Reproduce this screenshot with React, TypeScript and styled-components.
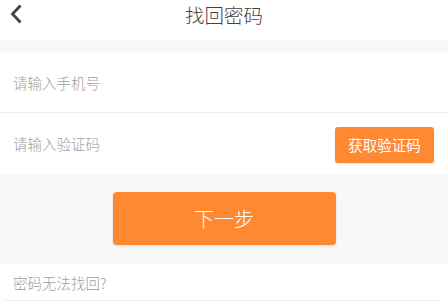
import React from "react";
import styled, { createGlobalStyle } from "styled-components";

const Global = createGlobalStyle`
  html, body { margin: 0; padding: 0; background: #ffffff; }
  body { font-family: "Noto Sans CJK SC", "Noto Sans", sans-serif; }
  * { box-sizing: border-box; }
`;

const Page = styled.div`
  width: 448px;
  height: 307px;
  display: flex;
  flex-direction: column;
  overflow: hidden;
  background: #ffffff;
`;

const Header = styled.header`
  height: 40px;
  display: grid;
  grid-template-columns: 40px 1fr 40px;
  align-items: start;
  background: #ffffff;
`;

const Back = styled.button`
  border: none;
  background: none;
  padding: 4px 0 0 9px;
  display: flex;
  cursor: pointer;
`;

const Title = styled.h1`
  margin: 0;
  text-align: center;
  font-size: 19.5px;
  font-weight: 300;
  color: #4b3e3e;
  line-height: 30px;
`;

const Spacer = styled.div<{ $h: number }>`
  height: ${(p) => p.$h}px;
  background: #f8f8f8;
`;

const Row = styled.div<{ $divider?: boolean }>`
  height: 61px;
  display: flex;
  align-items: center;
  justify-content: space-between;
  padding: 0 14px 0 13px;
  background: #ffffff;
  border-bottom: ${(p) => (p.$divider ? "1px solid #ececec" : "none")};
`;

const Placeholder = styled.span`
  font-size: 14.5px;
  font-weight: 300;
  color: #9e9e9e;
`;

const CodeButton = styled.button`
  width: 99px;
  height: 36px;
  border: none;
  border-radius: 3px;
  background: #ff8833;
  color: #ffffff;
  font-family: inherit;
  font-size: 14.5px;
  padding: 0;
  box-shadow: 0 1px 2px rgba(0, 0, 0, 0.12);
  margin-top: 2px;
`;

const Action = styled.div`
  height: 90px;
  background: #f8f8f8;
  display: flex;
  justify-content: center;
  padding-top: 18px;
`;

const NextButton = styled.button`
  width: 223px;
  height: 53px;
  border: none;
  border-radius: 4px;
  background: #ff8833;
  color: #ffffff;
  font-family: inherit;
  font-size: 20px;
  font-weight: 300;
  padding: 0;
  box-shadow: 0 1px 3px rgba(0, 0, 0, 0.12);
`;

const Help = styled.div`
  height: 37px;
  margin: 0 6px 0 3px;
  padding-left: 10px;
  display: flex;
  align-items: center;
  border-bottom: 1px solid #efefef;
  font-size: 14.5px;
  font-weight: 300;
  color: #9e9e9e;
`;

export default function App() {
  return (
    <Page>
      <Global />
      <Header>
        <Back aria-label="返回">
          <svg width="14" height="20" viewBox="0 0 14 20">
            <path d="M11.5 1.5 L3.5 10 L11.5 18.5" fill="none" stroke="#4b3e3e" strokeWidth="2.8" />
          </svg>
        </Back>
        <Title>找回密码</Title>
        <span />
      </Header>
      <Spacer $h={12} />
      <Row $divider>
        <Placeholder>请输入手机号</Placeholder>
      </Row>
      <Row>
        <Placeholder>请输入验证码</Placeholder>
        <CodeButton>获取验证码</CodeButton>
      </Row>
      <Action>
        <NextButton>下一步</NextButton>
      </Action>
      <Help>密码无法找回?</Help>
    </Page>
  );
}
